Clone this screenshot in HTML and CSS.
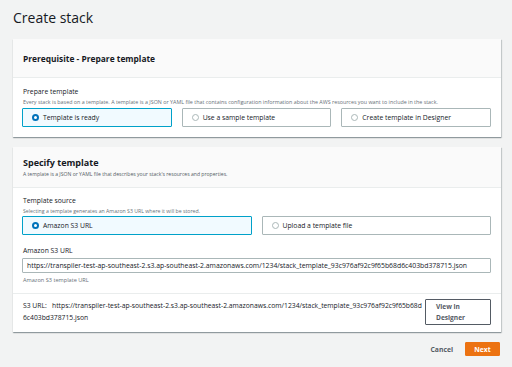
FILE: index.html
```html
<!DOCTYPE html>
<html>
<head>
<meta charset="utf-8">
<link rel="stylesheet" href="styles.css">
</head>
<body>
<div class="page">
  <h1 class="title">Create stack</h1>

  <section class="panel">
    <header class="panel-head head-one">
      <h2 class="panel-title">Prerequisite - Prepare template</h2>
    </header>
    <div class="panel-body body-one">
      <div class="label">Prepare template</div>
      <div class="desc">Every stack is based on a template. A template is a JSON or YAML file that contains configuration information about the AWS resources you want to include in the stack.</div>
      <div class="tiles three">
        <div class="tile selected"><span class="radio on"></span><span>Template is ready</span></div>
        <div class="tile"><span class="radio"></span><span>Use a sample template</span></div>
        <div class="tile"><span class="radio"></span><span>Create template in Designer</span></div>
      </div>
    </div>
  </section>

  <section class="panel panel-two">
    <header class="panel-head head-two">
      <h2 class="panel-title big">Specify template</h2>
      <div class="head-desc">A template is a JSON or YAML file that describes your stack's resources and properties.</div>
    </header>
    <div class="panel-body body-two">
      <div class="label">Template source</div>
      <div class="desc short">Selecting a template generates an Amazon S3 URL where it will be stored.</div>
      <div class="tiles two">
        <div class="tile selected"><span class="radio on"></span><span>Amazon S3 URL</span></div>
        <div class="tile"><span class="radio"></span><span>Upload a template file</span></div>
      </div>
      <div class="label url-label">Amazon S3 URL</div>
      <div class="input">https://transpiler-test-ap-southeast-2.s3.ap-southeast-2.amazonaws.com/1234/stack_template_93c976af92c9f65b68d6c403bd378715.json</div>
      <div class="hint">Amazon S3 template URL</div>
    </div>
    <div class="panel-foot">
      <p class="s3url">S3 URL:&nbsp;&nbsp; https://transpiler-test-ap-southeast-2.s3.ap-southeast-2.amazonaws.com/1234/stack_template_93c976af92c9f65b68d6c403bd378715.json</p>
      <button class="btn-designer">View in<br>Designer</button>
    </div>
  </section>

  <div class="actions">
    <button class="btn-link">Cancel</button>
    <button class="btn-primary">Next</button>
  </div>
</div>
</body>
</html>
```

FILE: styles.css
```css
* { box-sizing: border-box; }
html, body { margin: 0; padding: 0; }
body {
  background: #f2f3f3;
  font-family: "Open Sans", "Liberation Sans", sans-serif;
  color: #16191f;
}
.page {
  padding: 0 11px 0 13px;
}
.title {
  margin: 0;
  height: 39px;
  line-height: 36px;
  font-size: 14px;
  font-weight: 400;
  color: #16191f;
}
.panel {
  background: #fff;
  box-shadow: 0 1px 1px 0 rgba(0, 28, 36, 0.3), 1px 1px 1px 0 rgba(0, 28, 36, 0.15);
}
.panel-two { margin-top: 10px; }
.panel-head {
  background: #fafafa;
  border-bottom: 1px solid #eaeded;
  padding: 0 10px;
}
.head-one {
  height: 39px;
  display: flex;
  align-items: center;
}
.head-two {
  height: 41px;
  padding-top: 9px;
}
.panel-title {
  margin: 0;
  font-size: 8.4px;
  font-weight: 700;
  line-height: 13px;
}
.panel-title.big { font-size: 9px; }
.head-desc {
  font-size: 5.1px;
  line-height: 10px;
  color: #545b64;
}
.panel-body { padding: 0 10px; }
.body-one { padding-top: 9px; padding-bottom: 10px; }
.body-two { padding-top: 8px; padding-bottom: 8px; border-bottom: 1px solid #eaeded; }
.label {
  font-size: 6.8px;
  line-height: 10px;
  color: #16191f;
}
.desc {
  font-size: 5.35px;
  line-height: 10px;
  color: #687078;
}
.desc.short { font-size: 5.2px; }
.tiles {
  display: grid;
  gap: 10px;
  margin-left: -1px;
}
.tiles.three { grid-template-columns: 1fr 1fr 1fr; margin-top: 1px; }
.tiles.two { grid-template-columns: 1fr 1fr; }
.tile {
  height: 19px;
  border: 1px solid #aab7b8;
  border-radius: 1px;
  display: flex;
  align-items: center;
  gap: 4px;
  padding-left: 9px;
  font-size: 6.8px;
  color: #16191f;
}
.tile.selected {
  background: #f1faff;
  border-color: #00a1c9;
}
.radio {
  width: 7px;
  height: 7px;
  border-radius: 50%;
  border: 1px solid #aab7b8;
  background: #fff;
  flex: none;
}
.radio.on {
  border: 2px solid #0073bb;
}
.url-label { margin-top: 11px; }
.input {
  margin-top: 2px;
  height: 15px;
  border: 1px solid #aab7b8;
  border-radius: 1px;
  padding-left: 4px;
  margin-left: -1px;
  font-size: 6.85px;
  line-height: 13px;
  white-space: nowrap;
  overflow: hidden;
  color: #16191f;
}
.hint {
  margin-top: 2px;
  font-size: 5.6px;
  line-height: 10px;
  color: #687078;
}
.panel-foot {
  display: flex;
  align-items: flex-start;
  gap: 1px;
  padding: 5px 10px 7px 10px;
}
.s3url {
  flex: 1;
  margin: 0;
  padding-top: 1px;
  font-size: 6.78px;
  line-height: 12px;
  word-break: break-all;
  color: #16191f;
}
.btn-designer {
  flex: none;
  width: 66px;
  height: 26px;
  border: 1px solid #545b64;
  border-radius: 1px;
  background: #fff;
  padding: 0 0 0 10px;
  text-align: left;
  font-family: inherit;
  font-size: 6.6px;
  font-weight: 700;
  line-height: 11px;
  color: #545b64;
}
.actions {
  display: flex;
  justify-content: flex-end;
  align-items: center;
  gap: 12px;
  padding-top: 10px;
  padding-right: 1px;
}
.btn-link {
  border: 0;
  background: none;
  padding: 0;
  font-family: inherit;
  font-size: 6.8px;
  font-weight: 700;
  color: #545b64;
}
.btn-primary {
  width: 35px;
  height: 14px;
  border: 1px solid #ec7211;
  border-radius: 1px;
  background: #ec7211;
  padding: 0;
  font-family: inherit;
  font-size: 6.8px;
  font-weight: 700;
  color: #fff;
}
```
